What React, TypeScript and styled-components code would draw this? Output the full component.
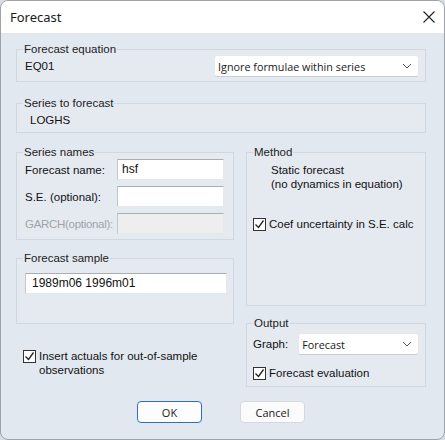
import React from 'react'
import styled, { createGlobalStyle } from 'styled-components'

const GlobalStyle = createGlobalStyle`
  html, body { margin: 0; padding: 0; background: #d8dde3; }
  body { font-family: "Liberation Sans", Arial, sans-serif; font-size: 11.5px; color: #111; }
  * { box-sizing: border-box; }
`

const Window = styled.div`
  width: 445px;
  height: 440px;
  border: 1px solid #9ea3a9;
  border-radius: 8px;
  overflow: hidden;
  background: #e2e8f0;
  display: flex;
  flex-direction: column;
`

const TitleBar = styled.div`
  height: 33px;
  flex: none;
  background: #fff;
  border-bottom: 1px solid #e3e7ec;
  display: flex;
  align-items: center;
  justify-content: space-between;
  padding: 0 8px 0 9px;
  font-family: "Noto Sans", "Open Sans", sans-serif;
  font-size: 13px;
  color: #1a1a1a;
`

const Body = styled.div`
  padding: 9px 18px 0 15px;
  display: flex;
  flex-direction: column;
`

const Group = styled.fieldset<{ $indent?: number }>`
  margin: 0;
  min-width: 0;
  border: 1px solid #d0d7e0;
  background: #e5eaf1;
  padding: 0 6px 4px ${p => 6 + (p.$indent ?? 0)}px;
`

const Legend = styled.legend`
  padding: 0 1px;
  line-height: 12px;
  color: #222;
`

const Spread = styled.div`
  display: flex;
  align-items: center;
  justify-content: space-between;
  padding-left: 2px;
`

const Value = styled.div`
  line-height: 14px;
`

const Select = styled.div<{ $width: number }>`
  width: ${p => p.$width}px;
  height: 22px;
  background: #fff;
  border: 1px solid #e4e7eb;
  border-bottom-color: #c9ced4;
  border-radius: 3px;
  display: flex;
  align-items: center;
  justify-content: space-between;
  padding: 0 6px 0 3px;
  font-family: "Open Sans", "Noto Sans", sans-serif;
  font-size: 10.8px;
  color: #1a1a1a;
`

const Columns = styled.div`
  display: grid;
  grid-template-columns: 218px 180px;
  justify-content: space-between;
  margin-top: 13px;
`

const Stack = styled.div<{ $gap: number }>`
  display: flex;
  flex-direction: column;
  gap: ${p => p.$gap}px;
`

const FieldGrid = styled.div`
  display: grid;
  grid-template-columns: 92px 107px;
  grid-auto-rows: 21px;
  row-gap: 6px;
  align-items: center;
  padding: 1px 0 0 2px;
`

const FieldLabel = styled.span<{ $disabled?: boolean }>`
  color: ${p => (p.$disabled ? '#a0a4a8' : '#111')};
  white-space: nowrap;
  letter-spacing: ${p => (p.$disabled ? '-0.3px' : '0')};
`

const TextBox = styled.div<{ $disabled?: boolean }>`
  height: 21px;
  background: ${p => (p.$disabled ? '#eeeeee' : '#fff')};
  border: 1px solid #e6e9ec;
  border-top-color: #a9aeb4;
  border-left-color: #c3c7cc;
  padding: 1px 4px;
  line-height: 17px;
  font-size: 12px;
`

const SampleBox = styled(TextBox)`
  width: 202px;
  margin: 9px 0 0 2px;
  padding-left: 6px;
`

const Note = styled.div`
  padding: 5px 0 0 18px;
  line-height: 14px;
`

const Check = styled.label<{ $top?: number, $left?: number }>`
  display: flex;
  align-items: flex-start;
  gap: 3px;
  line-height: 14px;
  margin: ${p => p.$top ?? 0}px 0 0 ${p => p.$left ?? 0}px;
`

const Box = styled.span`
  flex: none;
  width: 13px;
  height: 13px;
  border: 1px solid #333;
  background: #fff;
  margin-top: 1px;
  display: flex;
  align-items: center;
  justify-content: center;
`

const Row = styled.div`
  display: flex;
  align-items: center;
  gap: 10px;
  padding-top: 4px;
`

const Buttons = styled.div`
  display: flex;
  justify-content: center;
  gap: 38px;
  margin-top: 14px;
`

const Button = styled.button<{ $default?: boolean }>`
  width: 65px;
  height: 22px;
  font-family: "Open Sans", "Noto Sans", sans-serif;
  font-size: 11px;
  color: #1a1a1a;
  background: ${p => (p.$default ? '#fdfdfd' : '#fbfbfb')};
  border: 1px solid ${p => (p.$default ? '#2f6fbf' : '#d5d8dc')};
  border-radius: 4px;
  padding: 0;
`

const Chevron = () =>
  <svg width='10' height='6' viewBox='0 0 10 6'>
    <path d='M1 1l4 4 4-4' fill='none' stroke='#555' strokeWidth='1' />
  </svg>

const Tick = () =>
  <svg width='11' height='11' viewBox='0 0 11 11'>
    <path d='M1.5 5.5l3 3 5-7' fill='none' stroke='#222' strokeWidth='1.3' />
  </svg>

const Close = () =>
  <svg width='14' height='14' viewBox='0 0 14 14'>
    <path d='M1.5 1.5l11 11M12.5 1.5l-11 11' stroke='#222' strokeWidth='1.1' />
  </svg>

const CheckItem = ({ children, top, left }: { children: React.ReactNode, top?: number, left?: number }) =>
  <Check $top={top} $left={left}><Box><Tick /></Box><span>{children}</span></Check>

export default function App() {
  return <>
    <GlobalStyle />
    <Window>
      <TitleBar>
        <span>Forecast</span>
        <Close />
      </TitleBar>
      <Body>
        <Group>
          <Legend>Forecast equation</Legend>
          <Spread>
            <Value>EQ01</Value>
            <Select $width={205}>Ignore formulae within series<Chevron /></Select>
          </Spread>
        </Group>
        <Group $indent={7} style={{ marginTop: 15, paddingTop: 4, paddingBottom: 5 }}>
          <Legend style={{ marginLeft: -7 }}>Series to forecast</Legend>
          <Value>LOGHS</Value>
        </Group>
        <Columns>
          <Stack $gap={12}>
            <Group style={{ paddingBottom: 5 }}>
              <Legend>Series names</Legend>
              <FieldGrid>
                <FieldLabel>Forecast name:</FieldLabel>
                <TextBox>hsf</TextBox>
                <FieldLabel>S.E. (optional):</FieldLabel>
                <TextBox />
                <FieldLabel $disabled>GARCH(optional):</FieldLabel>
                <TextBox $disabled />
              </FieldGrid>
            </Group>
            <Group style={{ height: 72 }}>
              <Legend>Forecast sample</Legend>
              <SampleBox>1989m06 1996m01</SampleBox>
            </Group>
            <CheckItem top={13} left={7}>Insert actuals for out-of-sample<br />observations</CheckItem>
          </Stack>
          <Stack $gap={11}>
            <Group style={{ height: 160 }}>
              <Legend>Method</Legend>
              <Note>Static forecast<br />(no dynamics in equation)</Note>
              <CheckItem top={26}>Coef uncertainty in S.E. calc</CheckItem>
            </Group>
            <Group style={{ paddingBottom: 6 }}>
              <Legend>Output</Legend>
              <Row>
                <span>Graph:</span>
                <Select $width={121}>Forecast<Chevron /></Select>
              </Row>
              <CheckItem top={11}>Forecast evaluation</CheckItem>
            </Group>
          </Stack>
        </Columns>
        <Buttons>
          <Button $default>OK</Button>
          <Button>Cancel</Button>
        </Buttons>
      </Body>
    </Window>
  </>
}
